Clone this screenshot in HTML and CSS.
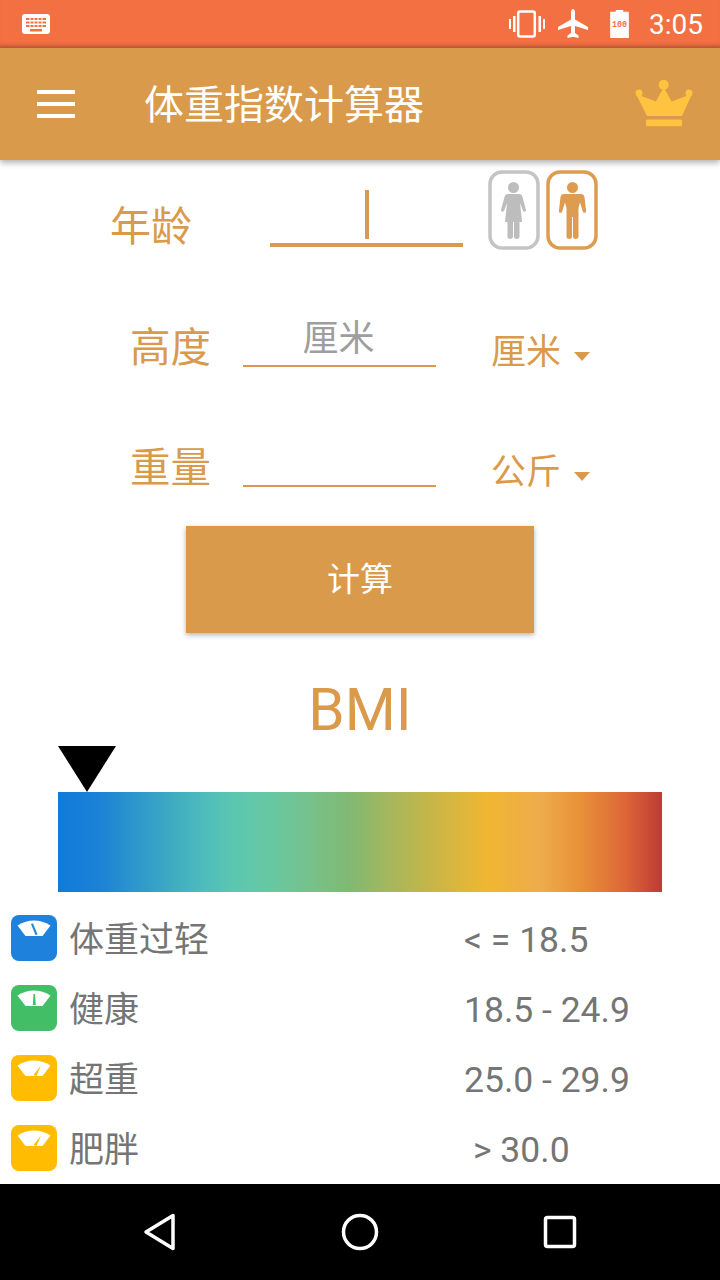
FILE: index.html
```html
<!DOCTYPE html>
<html lang="zh-CN">
<head>
    <meta charset="UTF-8">
    <meta name="viewport" content="width=device-width, initial-scale=1.0">
    <title>体重指数计算器</title>
    <link rel="stylesheet" href="styles.css">
</head>
<body>
    <div class="screen">

        <div class="status">
            <svg class="kb" width="28" height="20" viewBox="0 0 28 20">
                <rect width="28" height="20" rx="3" fill="#fff"/>
                <g fill="#f37043">
                    <rect x="4" y="4" width="20" height="2"/>
                    <rect x="4" y="7.5" width="20" height="2"/>
                    <rect x="4" y="11" width="20" height="2"/>
                    <rect x="8" y="15" width="12" height="2.5"/>
                </g>
                <g fill="#fff">
                    <rect x="7.5" y="4" width="1" height="9"/>
                    <rect x="11.5" y="4" width="1" height="9"/>
                    <rect x="15.5" y="4" width="1" height="9"/>
                    <rect x="19.5" y="4" width="1" height="9"/>
                </g>
            </svg>
            <div class="status-right">
                <svg class="vib" width="36" height="28" viewBox="0 0 36 28">
                    <rect x="9.200" y="1.500" width="16.600" height="25" rx="2" fill="none" stroke="#fff" stroke-width="2.500"/>
                    <path d="M0 9h2v10H0zM4 6h2.500v16H4zM29.500 6H32v16h-2.500zM34 9h2v10h-2z" fill="#fff"/>
                </svg>
                <svg class="plane" width="30" height="30" viewBox="0 0 30 30">
                    <path d="M15 0c1.200 0 2 1.500 2 3v7.500l13 7.500v3l-13-4v7l3.500 2.500V29L15 27.800 9.500 29v-2.500L13 24v-7L0 21v-3l13-7.500V3c0-1.500.8-3 2-3z" fill="#fff"/>
                </svg>
                <svg class="batt" width="19" height="28" viewBox="0 0 20 30">
                    <path d="M6 0h8v2h6v28H0V2h6z" fill="#fff"/>
                    <text x="10" y="18" text-anchor="middle" class="batt-num">100</text>
                </svg>
                <span class="time">3:05</span>
            </div>
        </div>

        <div class="appbar">
            <div class="menu"><i></i><i></i><i></i></div>
            <div class="title">体重指数计算器</div>
            <svg class="crown" width="90" height="70" viewBox="0 0 90 70">
                <g fill="#ffc33f">
                    <circle cx="19" cy="24" r="3.500"/>
                    <circle cx="69" cy="24" r="3.500"/>
                    <circle cx="43.700" cy="15.700" r="5"/>
                    <path d="M16 25l20 7.500L43.700 18l7.800 14.500L72 25l-10 22H27z"/>
                    <rect x="26" y="50.600" width="36" height="6.700" rx="1.500"/>
                </g>
            </svg>
        </div>

        <div class="main">

            <div class="row age-row">
                <div class="age-label">年龄</div>
                <div class="age-input"><span class="caret"></span></div>
                <div class="gender">
                    <svg width="52" height="80" viewBox="0 0 52 80">
                        <rect x="2" y="2" width="48" height="76" rx="12" fill="none" stroke="#c4c4c4" stroke-width="3.500"/>
                        <g fill="#bdbdbd">
                            <circle cx="25.500" cy="17.500" r="5.500"/>
                            <path d="M20 24h11c2 0 3 1 3.500 3l3.500 13c.4 1.500-2 2.500-3 1l-3-8 2 19H17l2-19-3 8c-1 1.500-3.400.5-3-1l3.500-13c.5-2 1.500-3 3.500-3z"/>
                            <path d="M19.500 50h5.500v17c0 2.500-5.500 2.500-5.500 0zM26 50h5.500v17c0 2.500-5.500 2.500-5.500 0z"/>
                        </g>
                    </svg>
                    <svg width="52" height="80" viewBox="0 0 52 80">
                        <rect x="2" y="2" width="48" height="76" rx="12" fill="none" stroke="#dd9c50" stroke-width="3.500"/>
                        <g fill="#dd9c50">
                            <circle cx="26.500" cy="17.500" r="5.500"/>
                            <path d="M18 24h17c2 0 3 1 3.500 3l1.600 14c.2 2-2.300 2.500-3.100 1l-3-9.500-1.500 5.500v29c0 2.500-5.500 2.500-5.500 0V47h-1v20c0 2.500-5.500 2.500-5.500 0V38L19 32.500l-3 9.500c-.8 1.500-3.300 1-3.100-1l1.600-14c.5-2 1.500-3 3.500-3z"/>
                        </g>
                    </svg>
                </div>
            </div>

            <div class="row">
                <div class="label">高度</div>
                <div class="input placeholder">厘米</div>
                <div class="unit">厘米<span class="arrow"></span></div>
            </div>

            <div class="row">
                <div class="label">重量</div>
                <div class="input"></div>
                <div class="unit">公斤<span class="arrow"></span></div>
            </div>

            <button class="calc">计算</button>

            <div class="bmi">BMI</div>
            <div class="pointer"></div>
            <div class="scale"></div>

            <div class="legend">
                <div class="item">
                    <svg class="ico" width="46" height="46" viewBox="0 0 46 46">
                        <rect width="46" height="46" rx="8" fill="#1e82dc"/>
                        <path d="M6.500 10.500Q23 .5 39.500 10.500L31.500 21h-17z" fill="#fff"/>
                        <path d="M20 9l2-.5 4.500 11-2 .5z" fill="#1e82dc"/>
                    </svg>
                    <span class="name">体重过轻</span>
                    <span class="val">&lt; = 18.5</span>
                </div>
                <div class="item">
                    <svg class="ico" width="46" height="46" viewBox="0 0 46 46">
                        <rect width="46" height="46" rx="8" fill="#42bf66"/>
                        <path d="M6.500 10.500Q23 .5 39.500 10.500L31.500 21h-17z" fill="#fff"/>
                        <path d="M22.500 9h1.500l.8 11h-3z" fill="#42bf66"/>
                    </svg>
                    <span class="name">健康</span>
                    <span class="val">18.5 - 24.9</span>
                </div>
                <div class="item">
                    <svg class="ico" width="46" height="46" viewBox="0 0 46 46">
                        <rect width="46" height="46" rx="8" fill="#ffbc00"/>
                        <path d="M6.500 10.500Q23 .5 39.500 10.500L31.500 21h-17z" fill="#fff"/>
                        <path d="M30 10.500l-7.500 9.500 3 1z" fill="#ffbc00"/>
                    </svg>
                    <span class="name">超重</span>
                    <span class="val">25.0 - 29.9</span>
                </div>
                <div class="item">
                    <svg class="ico" width="46" height="46" viewBox="0 0 46 46">
                        <rect width="46" height="46" rx="8" fill="#ffbc00"/>
                        <path d="M6.500 10.500Q23 .5 39.500 10.500L31.500 21h-17z" fill="#fff"/>
                        <path d="M30 10.500l-7.500 9.500 3 1z" fill="#ffbc00"/>
                    </svg>
                    <span class="name">肥胖</span>
                    <span class="val last">&gt; 30.0</span>
                </div>
            </div>

        </div>

        <div class="nav">
            <svg width="36" height="40" viewBox="0 0 36 40">
                <path d="M31 3.500v33L4 20z" fill="none" stroke="#fff" stroke-width="3.500" stroke-linejoin="round"/>
            </svg>
            <svg width="40" height="40" viewBox="0 0 40 40">
                <circle cx="20" cy="20" r="16.500" fill="none" stroke="#fff" stroke-width="3.500"/>
            </svg>
            <svg width="36" height="36" viewBox="0 0 36 36">
                <rect x="3.500" y="3.500" width="29" height="29" rx="2" fill="none" stroke="#fff" stroke-width="3.500"/>
            </svg>
        </div>

    </div>
</body>
</html>
```

FILE: styles.css
```css
* {
    box-sizing: border-box;
}

body {
    margin: 0;
    background: #fff;
    font-family: "Noto Sans CJK SC", Roboto, sans-serif;
}

.screen {
    width: 720px;
    height: 1280px;
    display: flex;
    flex-direction: column;
    overflow: hidden;
}

/* status bar */
.status {
    height: 48px;
    flex: none;
    display: flex;
    align-items: center;
    padding: 0 17px 0 22px;
    background: #f37043;
    box-shadow: inset 0 -5px 4px -3px rgba(0, 0, 0, .25);
    color: #fff;
}

.status-right {
    margin-left: auto;
    display: flex;
    align-items: center;
}

.vib {
    margin-right: 13px;
}

.plane {
    margin-right: 22px;
}

.batt {
    margin-right: 20px;
}

.batt-num {
    font: bold 9px "Liberation Mono", monospace;
    fill: #f37043;
}

.time {
    font: 28px Roboto, sans-serif;
}

/* app bar */
.appbar {
    height: 112px;
    flex: none;
    display: flex;
    align-items: center;
    padding-left: 37px;
    background: #d99a4c;
    box-shadow: 0 3px 6px rgba(0, 0, 0, .3);
    position: relative;
    color: #fff;
}

.menu {
    width: 38px;
    display: flex;
    flex-direction: column;
    gap: 8px;
}

.menu i {
    display: block;
    height: 4px;
    background: #fff;
}

.title {
    margin: 0 0 4px 69px;
    font-size: 40px;
    line-height: 56px;
}

.crown {
    margin-left: auto;
    margin-right: 10px;
}

/* form */
.main {
    flex: 1;
    min-height: 0;
}

.row {
    height: 120px;
    display: flex;
    align-items: flex-start;
    padding-left: 130px;
    color: #d99a4c;
}

.age-row {
    padding-left: 110px;
}

.age-label {
    width: 160px;
    margin-top: 38px;
    font-size: 41px;
    line-height: 50px;
}

.age-input {
    width: 193px;
    height: 57px;
    margin-top: 30px;
    padding-left: 1px;
    border-bottom: 4px solid #d99a4c;
    display: flex;
    justify-content: center;
}

.caret {
    width: 4px;
    height: 49px;
    background: #d99a4c;
}

.gender {
    margin: 10px 0 0 25px;
    display: flex;
    gap: 6px;
}

.label {
    width: 113px;
    margin-top: 40px;
    font-size: 40.5px;
    line-height: 50px;
    white-space: nowrap;
}

.input {
    width: 193px;
    height: 57px;
    margin-top: 30px;
    border-bottom: 2px solid #d99a4c;
}

.placeholder {
    padding-right: 2px;
    text-align: center;
    color: #9e9e9e;
    font-size: 36px;
    line-height: 50px;
}

.unit {
    margin: 44px 0 0 55px;
    font-size: 35px;
    line-height: 50px;
    display: flex;
    align-items: center;
}

.arrow {
    margin: 14px 0 0 13px;
    border-top: 9px solid #d99a4c;
    border-left: 8.5px solid transparent;
    border-right: 8.5px solid transparent;
}

.calc {
    display: block;
    width: 348px;
    height: 107px;
    margin: 6px auto 0;
    padding: 0 0 6px;
    border: none;
    background: #d99a4c;
    box-shadow: 0 2px 5px rgba(0, 0, 0, .3);
    color: #fff;
    font-family: inherit;
    font-size: 33px;
}

/* bmi scale */
.bmi {
    margin-top: 45px;
    height: 64px;
    text-align: center;
    color: #d99a4c;
    font: 58.5px/64px Roboto, sans-serif;
}

.pointer {
    width: 0;
    margin: 4px 0 0 58px;
    border-top: 46px solid #000;
    border-left: 29px solid transparent;
    border-right: 29px solid transparent;
}

.scale {
    width: 604px;
    height: 100px;
    margin-left: 58px;
    background: linear-gradient(to right, #0f7ad8 0%, #1c82d6 7%, #42afc0 20%, #4dbcbd 24%, #5bc7b0 29%, #66c8a3 35%, #79c086 43%, #80b974 48%, #a0b75f 54%, #c3b64a 61%, #f0b732 71%, #eeab4c 80%, #e99338 86%, #dc6638 94%, #bd3a35 100%);
}

/* legend */
.legend {
    margin-top: 11px;
}

.item {
    height: 70px;
    display: flex;
    align-items: center;
    padding-left: 11px;
    color: #757575;
    font-size: 35px;
}

.ico {
    flex: none;
}

.name {
    width: 395px;
    margin: 0 0 4px 12px;
}

.val {
    margin-top: 4px;
    font-family: Roboto, sans-serif;
    font-size: 35.5px;
}

.val.last {
    margin-left: 9px;
}

/* navigation bar */
.nav {
    height: 96px;
    flex: none;
    display: grid;
    grid-template-columns: repeat(3, 200px);
    justify-items: center;
    align-items: center;
    padding: 0 60px;
    background: #000;
}
```
